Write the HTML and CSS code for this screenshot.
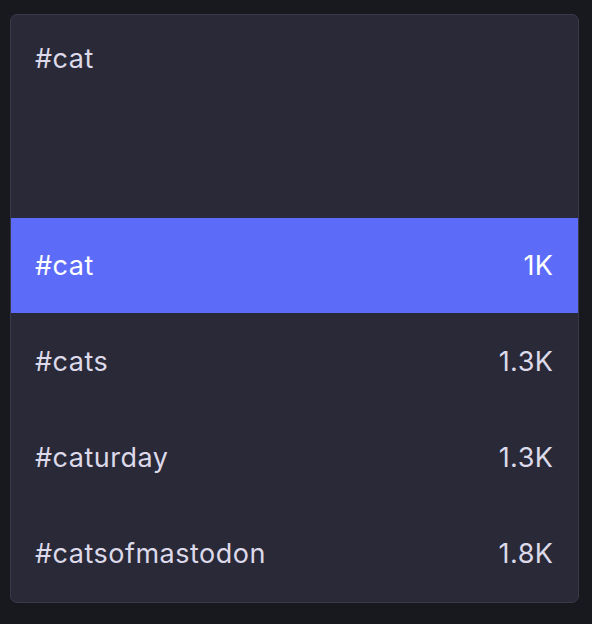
FILE: index.html
```html
<!DOCTYPE html>
<html>
<head>
<meta charset="utf-8">
<link rel="stylesheet" href="styles.css">
</head>
<body>
<div class="card">
  <div class="input">#cat</div>
  <ul class="list">
    <li class="item active"><span class="tag">#cat</span><span class="count">1K</span></li>
    <li class="item"><span class="tag">#cats</span><span class="count">1.3K</span></li>
    <li class="item"><span class="tag">#caturday</span><span class="count">1.3K</span></li>
    <li class="item"><span class="tag">#catsofmastodon</span><span class="count">1.8K</span></li>
  </ul>
</div>
</body>
</html>
```
FILE: styles.css
```css
html, body {
  margin: 0;
  padding: 0;
  background: #18181f;
  height: 100%;
}
body {
  padding: 14px 13px 0 10px;
  box-sizing: border-box;
  font-family: Inter, "Noto Sans", sans-serif;
  letter-spacing: 0.5px;
}
.card {
  background: #2a2937;
  border: 1px solid #3a394b;
  border-radius: 7px;
  overflow: hidden;
}
.input {
  height: 203px;
  box-sizing: border-box;
  padding: 27px 24px 0 24px;
  font-size: 27px;
  line-height: 34px;
  color: #dcdaea;
}
.list {
  list-style: none;
  margin: 0;
  padding: 0 0 1px 0;
}
.item {
  display: flex;
  justify-content: space-between;
  align-items: center;
  height: 96px;
  padding: 0 25px 0 24px;
  font-size: 27px;
  color: #dcdaea;
}
.count {
  margin-right: -0.5px;
}
.item.active {
  background: #5c6cf8;
  color: #ffffff;
  height: 95px;
}
```
